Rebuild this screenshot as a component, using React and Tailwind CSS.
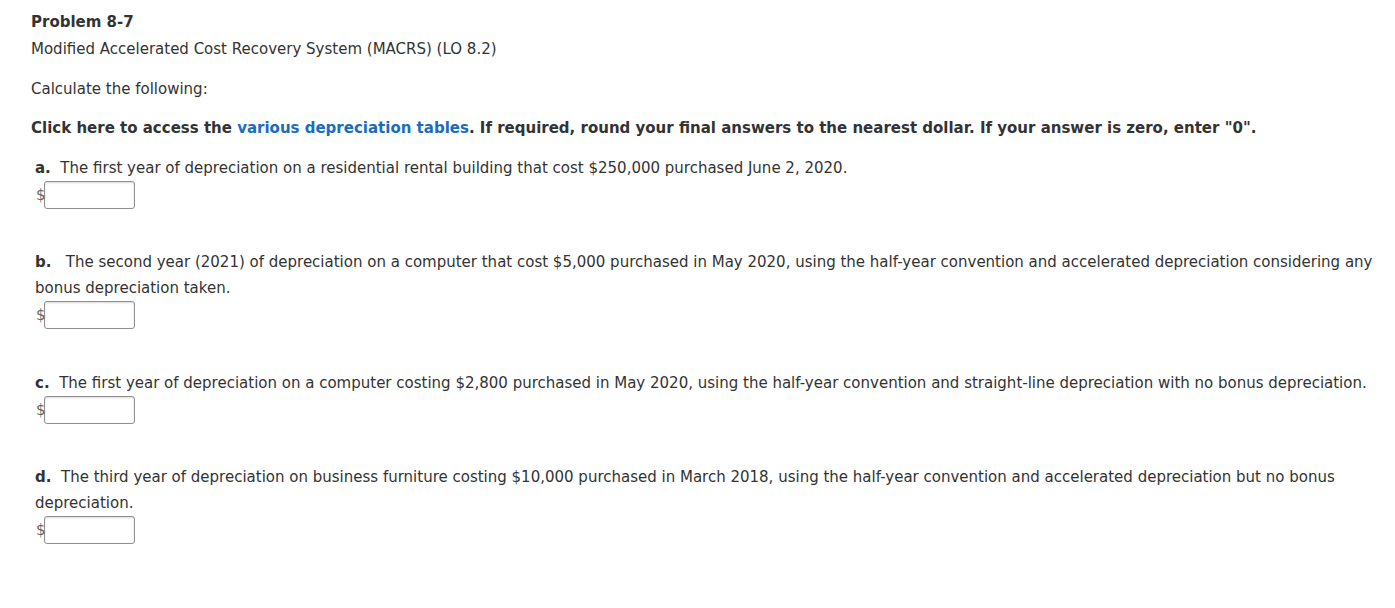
import React from "react";

function Answer() {
  return (
    <div className="flex items-center h-[28px] pl-[1px]">
      <span className="relative z-10 text-[15px] text-[#666] leading-none">$</span>
      <div className="ml-[-2px] w-[91px] h-[28px] border border-[#8f8f8f] rounded-[3px] bg-white shadow-[inset_0_1px_2px_rgba(0,0,0,0.15)]" />
    </div>
  );
}

export default function App() {
  return (
    <div
      className="w-[1395px] h-[608px] bg-white text-[#333] text-[15px] leading-[26px] pl-[31px] pt-[9px]"
      style={{ fontFamily: '"DejaVu Sans", Verdana, sans-serif' }}
    >
      <div className="font-bold">Problem 8-7</div>
      <div className="mt-[1px]">Modified Accelerated Cost Recovery System (MACRS) (LO 8.2)</div>
      <div className="mt-[14px]">Calculate the following:</div>
      <div className="mt-[13px] font-bold">
        Click here to access the <span className="text-[#1a6cbf]">various depreciation tables</span>. If required, round your final answers to the nearest dollar. If your answer is zero, enter "0".
      </div>

      <div className="mt-[14px] pl-[4px]">
        <div className="whitespace-nowrap">
          <b>a.</b>&nbsp; The first year of depreciation on a residential rental building that cost $250,000 purchased June 2, 2020.
        </div>
        <Answer />
      </div>

      <div className="mt-[40px] pl-[4px]">
        <div className="whitespace-nowrap">
          <b>b.</b>&nbsp;&nbsp; The second year (2021) of depreciation on a computer that cost $5,000 purchased in May 2020, using the half-year convention and accelerated depreciation considering any
          <br />
          bonus depreciation taken.
        </div>
        <Answer />
      </div>

      <div className="mt-[41px] pl-[4px]">
        <div className="whitespace-nowrap">
          <b>c.</b>&nbsp; The first year of depreciation on a computer costing $2,800 purchased in May 2020, using the half-year convention and straight-line depreciation with no bonus depreciation.
        </div>
        <Answer />
      </div>

      <div className="mt-[40px] pl-[4px]">
        <div className="whitespace-nowrap">
          <b>d.</b>&nbsp; The third year of depreciation on business furniture costing $10,000 purchased in March 2018, using the half-year convention and accelerated depreciation but no bonus
          <br />
          depreciation.
        </div>
        <Answer />
      </div>
    </div>
  );
}
